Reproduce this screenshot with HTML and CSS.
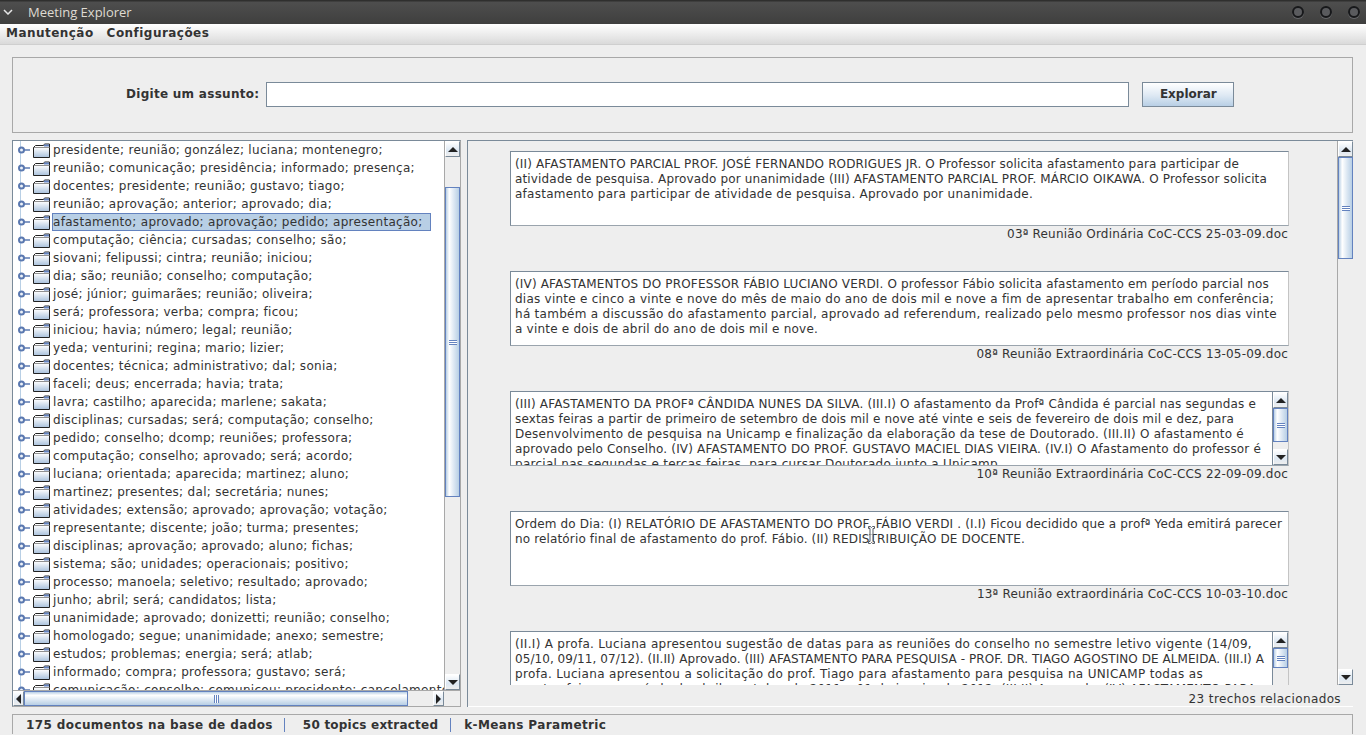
FILE: index.html
```html
<!DOCTYPE html>
<html lang="en">
<head>
  <meta charset="UTF-8">
  <meta name="viewport" content="width=device-width, initial-scale=1.0">
  <title>Meeting Explorer</title>
  <link rel="stylesheet" href="styles.css">
</head>
<body>
  <div class="titlebar">
    <svg class="chevron" width="10" height="6" viewBox="0 0 10 6"><path d="M1 1l4 4 4-4" fill="none" stroke="#e6e6e6" stroke-width="1.5"/></svg>
    <span class="title">Meeting Explorer</span>
    <div class="win-buttons"><span class="win-btn"></span><span class="win-btn"></span><span class="win-btn"></span></div>
  </div>
  <div class="menubar"><span>Manutenção</span><span>Configurações</span></div>

  <div class="content">
    <div class="search-panel">
      <label for="subject">Digite um assunto:</label>
      <input type="text" id="subject">
      <button>Explorar</button>
    </div>

    <div class="split">
      <div class="tree-pane">
        <div class="tree-main">
          <ul class="tree" id="tree"></ul>
          <div class="vbar tree-vbar">
            <div class="arrow up"></div>
            <div class="track"><div class="thumb"><i class="grip"></i></div></div>
            <div class="arrow down"></div>
          </div>
        </div>
        <div class="hbar">
          <div class="arrow left"></div>
          <div class="track"><div class="thumb"><i class="grip"></i></div></div>
          <div class="arrow right"></div>
          <div class="corner"></div>
        </div>
      </div>

      <div class="result-pane">
        <div class="result-main">
          <div class="results">
            <div class="result">
              <div class="excerpt"><p>
                <span class="line" data-end="1239">(II) AFASTAMENTO PARCIAL PROF. JOSÉ FERNANDO RODRIGUES JR. O Professor solicita afastamento para participar de</span>
                <span class="line" data-end="1267">atividade de pesquisa. Aprovado por unanimidade (III) AFASTAMENTO PARCIAL PROF. MÁRCIO OIKAWA. O Professor solicita</span>
                <span class="line" data-end="1033">afastamento para participar de atividade de pesquisa. Aprovado por unanimidade.</span>
              </p></div>
              <div class="source">03ª Reunião Ordinária CoC-CCS 25-03-09.doc</div>
            </div>
            <div class="result">
              <div class="excerpt"><p>
                <span class="line" data-end="1269">(IV) AFASTAMENTOS DO PROFESSOR FÁBIO LUCIANO VERDI. O professor Fábio solicita afastamento em período parcial nos</span>
                <span class="line" data-end="1274">dias vinte e cinco a vinte e nove do mês de maio do ano de dois mil e nove a fim de apresentar trabalho em conferência;</span>
                <span class="line" data-end="1277">há também a discussão do afastamento parcial, aprovado ad referendum, realizado pelo mesmo professor nos dias vinte</span>
                <span class="line" data-end="818">a vinte e dois de abril do ano de dois mil e nove.</span>
              </p></div>
              <div class="source">08ª Reunião Extraordinária CoC-CCS 13-05-09.doc</div>
            </div>
            <div class="result">
              <div class="excerpt"><p>
                <span class="line" data-end="1256">(III) AFASTAMENTO DA PROFª CÂNDIDA NUNES DA SILVA. (III.I) O afastamento da Profª Cândida é parcial nas segundas e</span>
                <span class="line" data-end="1234">sextas feiras a partir de primeiro de setembro de dois mil e nove até vinte e seis de fevereiro de dois mil e dez, para</span>
                <span class="line" data-end="1244">Desenvolvimento de pesquisa na Unicamp e finalização da elaboração da tese de Doutorado. (III.II) O afastamento é</span>
                <span class="line" data-end="1261">aprovado pelo Conselho. (IV) AFASTAMENTO DO PROF. GUSTAVO MACIEL DIAS VIEIRA. (IV.I) O Afastamento do professor é</span>
                <span class="line" data-end="1002">parcial nas segundas e terças feiras, para cursar Doutorado junto a Unicamp.</span>
              </p>
                <div class="vbar mini-vbar">
                  <div class="arrow up"></div>
                  <div class="track"><div class="thumb"><i class="grip"></i></div></div>
                  <div class="arrow down"></div>
                </div>
              </div>
              <div class="source">10ª Reunião Extraordinária CoC-CCS 22-09-09.doc</div>
            </div>
            <div class="result">
              <div class="excerpt"><p>
                <span class="line" data-end="1282">Ordem do Dia: (I) RELATÓRIO DE AFASTAMENTO DO PROF. FÁBIO VERDI . (I.I) Ficou decidido que a profª Yeda emitirá parecer</span>
                <span class="line" data-end="1025">no relatório final de afastamento do prof. Fábio. (II) REDISTRIBUIÇÃO DE DOCENTE.</span>
              </p></div>
              <div class="source">13ª Reunião extraordinária CoC-CCS 10-03-10.doc</div>
            </div>
            <div class="result">
              <div class="excerpt"><p>
                <span class="line" data-end="1252">(II.I) A profa. Luciana apresentou sugestão de datas para as reuniões do conselho no semestre letivo vigente (14/09,</span>
                <span class="line" data-end="1264">05/10, 09/11, 07/12). (II.II) Aprovado. (III) AFASTAMENTO PARA PESQUISA - PROF. DR. TIAGO AGOSTINO DE ALMEIDA. (III.I) A</span>
                <span class="line" data-end="1203">profa. Luciana apresentou a solicitação do prof. Tiago para afastamento para pesquisa na UNICAMP todas as</span>
                <span class="line" data-end="1256">quartas feiras no período de abril a outubro de 2011 e 01 de janeiro de 2012. (III.II) Aprovado. (IV) AFASTAMENTO PARA</span>
              </p>
                <div class="vbar mini-vbar last-vbar">
                  <div class="arrow up"></div>
                  <div class="track"><div class="thumb"><i class="grip"></i></div></div>
                  <div class="arrow down"></div>
                </div>
              </div>
            </div>
          </div>
          <div class="vbar result-vbar">
            <div class="arrow up"></div>
            <div class="track"><div class="thumb"><i class="grip"></i></div></div>
            <div class="arrow down"></div>
          </div>
        </div>
        <div class="count">23 trechos relacionados</div>
      </div>
    </div>

    <div class="statusbar">
      <span class="stat-docs">175 documentos na base de dados</span>
      <span class="stat-topics">50 topics extracted</span>
      <span class="stat-algo">k-Means Parametric</span>
    </div>
  </div>

  <svg class="ibeam" width="9" height="20" viewBox="0 0 9 20"><path d="M1.5 1.5h2l1 1 1-1h2v2h-1.500v13h1.500v2h-2l-1-1-1 1h-2v-2h1.500v-13h-1.500z" fill="#fff" fill-opacity=".7" stroke="#555a62"/></svg>

  <script>
    const topics = [
      'presidente; reunião; gonzález; luciana; montenegro;',
      'reunião; comunicação; presidência; informado; presença;',
      'docentes; presidente; reunião; gustavo; tiago;',
      'reunião; aprovação; anterior; aprovado; dia;',
      'afastamento; aprovado; aprovação; pedido; apresentação;',
      'computação; ciência; cursadas; conselho; são;',
      'siovani; felipussi; cintra; reunião; iniciou;',
      'dia; são; reunião; conselho; computação;',
      'josé; júnior; guimarães; reunião; oliveira;',
      'será; professora; verba; compra; ficou;',
      'iniciou; havia; número; legal; reunião;',
      'yeda; venturini; regina; mario; lizier;',
      'docentes; técnica; administrativo; dal; sonia;',
      'faceli; deus; encerrada; havia; trata;',
      'lavra; castilho; aparecida; marlene; sakata;',
      'disciplinas; cursadas; será; computação; conselho;',
      'pedido; conselho; dcomp; reuniões; professora;',
      'computação; conselho; aprovado; será; acordo;',
      'luciana; orientada; aparecida; martinez; aluno;',
      'martinez; presentes; dal; secretária; nunes;',
      'atividades; extensão; aprovado; aprovação; votação;',
      'representante; discente; joão; turma; presentes;',
      'disciplinas; aprovação; aprovado; aluno; fichas;',
      'sistema; são; unidades; operacionais; positivo;',
      'processo; manoela; seletivo; resultado; aprovado;',
      'junho; abril; será; candidatos; lista;',
      'unanimidade; aprovado; donizetti; reunião; conselho;',
      'homologado; segue; unanimidade; anexo; semestre;',
      'estudos; problemas; energia; será; atlab;',
      'informado; compra; professora; gustavo; será;',
      'comunicação; conselho; comunicou; presidente; cancelamento;'
    ];

    const handle = '<svg class="handle" width="12" height="8" viewBox="0 0 12 8"><circle cx="3.500" cy="4" r="2.500" fill="#eef3f9" stroke="#5a78b0" stroke-width="2"/><path d="M6 4h6" stroke="#5a78b0" stroke-width="1.500"/></svg>';
    const folder = '<svg class="folder" width="17" height="15" viewBox="0 0 17 15"><defs><linearGradient id="fg" x1="0" y1="0" x2="0" y2="1"><stop offset="0" stop-color="#ffffff"/><stop offset="1" stop-color="#a9c1dc"/></linearGradient></defs><path d="M.5 4.500h16v10H.5z" fill="url(#fg)" stroke="#222"/><path d="M.5 4.500l2-2h8l1-1.500h5v3.500" fill="#fff" stroke="#222"/><path d="M11 1.500h5v2h-5z" fill="#6382bf"/></svg>';

    document.getElementById('tree').innerHTML = topics.map(function (t, i) {
      const cls = i === 4 ? 'node-label selected' : 'node-label';
      return '<li class="node">' + handle + folder + '<span class="' + cls + '">' + t + '</span></li>';
    }).join('');

    // Stretch each excerpt line so it ends where data-end says
    document.querySelectorAll('.line').forEach(function (line) {
      const extra = Number(line.dataset.end) - line.getBoundingClientRect().right;
      line.style.letterSpacing = (extra / line.textContent.length) + 'px';
    });
  </script>
</body>
</html>
```

FILE: styles.css
```css
* {
  box-sizing: border-box;
}

html, body {
  height: 100%;
}

body {
  margin: 0;
  overflow: hidden;
  background-color: #eeeeee;
  color: #333333;
  font-family: 'DejaVu Sans', sans-serif;
  font-size: 12px;
  display: flex;
  flex-direction: column;
}

/* window frame */
.titlebar {
  height: 24px;
  flex: none;
  display: flex;
  align-items: center;
  padding-left: 3px;
  background: linear-gradient(#2f2f2e 0, #2f2f2e 1px, #4e4e4e 2px, #3f3f3e 100%);
  color: #dfdbd2;
}

.chevron {
  flex: none;
}

.title {
  margin-left: 15px;
  font-family: 'Open Sans', sans-serif;
  font-size: 13px;
}

.win-buttons {
  margin-left: auto;
  margin-right: 6px;
  display: flex;
  gap: 16px;
}

.win-btn {
  width: 12px;
  height: 12px;
  border-radius: 50%;
  border: 2px solid #17181a;
  background: #5a5b5e;
  box-shadow: 0 1px 0 #66676a;
}

.menubar {
  height: 21px;
  flex: none;
  display: flex;
  align-items: center;
  gap: 13px;
  padding: 0 6px 2px;
  background: linear-gradient(#ffffff, #dadada);
  border-bottom: 1px solid #cfcfcf;
  font-weight: bold;
  letter-spacing: .46px;
}

.content {
  flex: 1;
  min-height: 0;
  display: flex;
  flex-direction: column;
  padding: 12px 13px 2px 12px;
}

/* search row */
.search-panel {
  height: 76px;
  flex: none;
  display: flex;
  align-items: center;
  padding: 0 0 2px 113px;
  border: 1px solid #a8a8a8;
}

.search-panel label {
  font-weight: bold;
  letter-spacing: .28px;
  margin-right: 7px;
}

.search-panel input {
  width: 863px;
  height: 25px;
  padding: 0 4px;
  background: #fff;
  border: 1px solid #7a8a99;
  outline: none;
}

.search-panel button {
  width: 92px;
  height: 25px;
  margin-left: 13px;
  padding: 0;
  font-family: inherit;
  font-size: 12px;
  font-weight: bold;
  color: #333333;
  border: 1px solid #7a8a99;
  background: linear-gradient(#ffffff, #dde8f3 55%, #b8cfe5);
}

.split {
  height: 567px;
  flex: none;
  margin-top: 7px;
  display: flex;
  gap: 6px;
}

/* left tree */
.tree-pane {
  width: 449px;
  flex: none;
  display: flex;
  flex-direction: column;
  border: 1px solid #7a8a99;
  border-bottom-color: #a8a8a8;
  border-right-color: #a8a8a8;
}

.tree-main {
  flex: 1;
  min-height: 0;
  display: flex;
}

.tree {
  flex: 1;
  min-width: 0;
  margin: 0;
  padding: 0;
  list-style: none;
  overflow: hidden;
  background: linear-gradient(#b8cfe5, #b8cfe5) no-repeat 7px 0 / 1px 100%, #fff;
}

.node {
  height: 18px;
  display: flex;
  align-items: center;
  white-space: nowrap;
  padding-left: 5px;
}

.handle {
  flex: none;
}

.folder {
  flex: none;
  margin-left: 3px;
}

.node-label {
  margin-left: 2px;
  padding: 0 7px 0 0;
  line-height: 16px;
  letter-spacing: .3px;
  border: 1px solid transparent;
}

.node-label.selected {
  background-color: #b8cfe5;
  border-color: #6382bf;
}

/* scrollbars */
.vbar {
  width: 16px;
  flex: none;
  display: flex;
  flex-direction: column;
  background-color: #eeeeee;
  border-left: 1px solid #a8a8a8;
}

.arrow {
  flex: none;
  height: 16px;
  display: flex;
  align-items: center;
  justify-content: center;
  background: linear-gradient(#ffffff, #dde8f3 60%, #eeeeee);
  border: 1px solid #7a8a99;
  border-left-color: #fff;
  border-top-color: #fff;
}

.arrow::after {
  content: "";
  border-style: solid;
  border-color: transparent;
}

.arrow.up::after {
  border-width: 0 5px 5px;
  border-bottom-color: #222;
}

.arrow.down::after {
  border-width: 5px 5px 0;
  border-top-color: #222;
}

.arrow.left::after {
  border-width: 5px 5px 5px 0;
  border-right-color: #222;
}

.arrow.right::after {
  border-width: 5px 0 5px 5px;
  border-left-color: #222;
}

.track {
  flex: 1;
  min-height: 0;
  min-width: 0;
  overflow: hidden;
}

.thumb {
  display: flex;
  align-items: center;
  justify-content: center;
  background: linear-gradient(90deg, #b8cfe5, #ffffff 25%, #dde8f3 60%, #b8cfe5);
  border: 1px solid #6382bf;
}

.grip {
  display: block;
  width: 8px;
  height: 5px;
  border-top: 1px solid #6382bf;
  border-bottom: 1px solid #6382bf;
  background: linear-gradient(#fff, #fff 1px, #6382bf 1px, #6382bf 2px, #fff 2px);
}

.tree-vbar .thumb {
  margin-top: 30px;
  height: 310px;
}

.hbar {
  height: 16px;
  flex: none;
  display: flex;
  background-color: #eeeeee;
  border-top: 1px solid #a8a8a8;
}

.hbar .arrow {
  width: 11px;
  height: 15px;
}

.hbar .track {
  flex: 1;
}

.hbar .thumb {
  width: 384px;
  height: 15px;
  background: linear-gradient(#b8cfe5, #ffffff 25%, #dde8f3 60%, #b8cfe5);
}

.hbar .grip {
  width: 5px;
  height: 8px;
  border: 0;
  border-left: 1px solid #6382bf;
  border-right: 1px solid #6382bf;
  background: linear-gradient(90deg, #fff, #fff 1px, #6382bf 1px, #6382bf 2px, #fff 2px);
}

.hbar .corner {
  width: 16px;
  flex: none;
}

/* right results */
.result-pane {
  flex: 1;
  min-width: 0;
  display: flex;
  flex-direction: column;
  border-left: 1px solid #7a8a99;
  border-top: 1px solid #7a8a99;
}

.result-main {
  height: 544px;
  flex: none;
  display: flex;
}

.results {
  flex: 1;
  min-width: 0;
  overflow: hidden;
  padding: 10px 48px 0 42px;
}

.result {
  height: 120px;
}

.excerpt {
  height: 75px;
  display: flex;
  overflow: hidden;
  background: #fff;
  border: 1px solid #7a8a99;
  border-right-color: #c4c4c4;
  border-bottom-color: #9aa4ad;
}

.excerpt p {
  flex: 1;
  min-width: 0;
  height: 100%;
  margin: 0;
  padding: 5px 0 0 4px;
  overflow: hidden;
  line-height: 15px;
  white-space: nowrap;
}

.line {
  display: block;
  width: max-content;
}

.source {
  margin-top: 1px;
  padding-right: 1px;
  line-height: 15px;
  letter-spacing: .19px;
  text-align: right;
}

.mini-vbar {
  border-left-color: #7a8a99;
}

.mini-vbar .thumb {
  height: 34px;
}

.last-vbar {
  height: 72px;
}

.last-vbar .thumb {
  height: 20px;
}

.result-vbar .thumb {
  height: 102px;
}

.count {
  flex: 1;
  display: flex;
  align-items: center;
  justify-content: flex-end;
  padding: 7px 12px 0 0;
  letter-spacing: .38px;
  border-bottom: 1px solid #fff;
}

/* bottom status */
.statusbar {
  height: 20px;
  flex: none;
  margin-top: 7px;
  display: flex;
  align-items: center;
  font-weight: bold;
  letter-spacing: .39px;
  border: 1px solid #a8a8a8;
  border-bottom-width: 0;
}

.stat-docs {
  padding: 0 11px 0 13px;
  border-right: 1px solid #6382bf;
}

.stat-topics {
  padding: 0 12px 0 18px;
  letter-spacing: .22px;
  border-right: 1px solid #6382bf;
}

.stat-algo {
  padding-left: 13px;
}

/* mouse pointer caught in the screenshot */
.ibeam {
  position: absolute;
  left: 867px;
  top: 525px;
}
```
